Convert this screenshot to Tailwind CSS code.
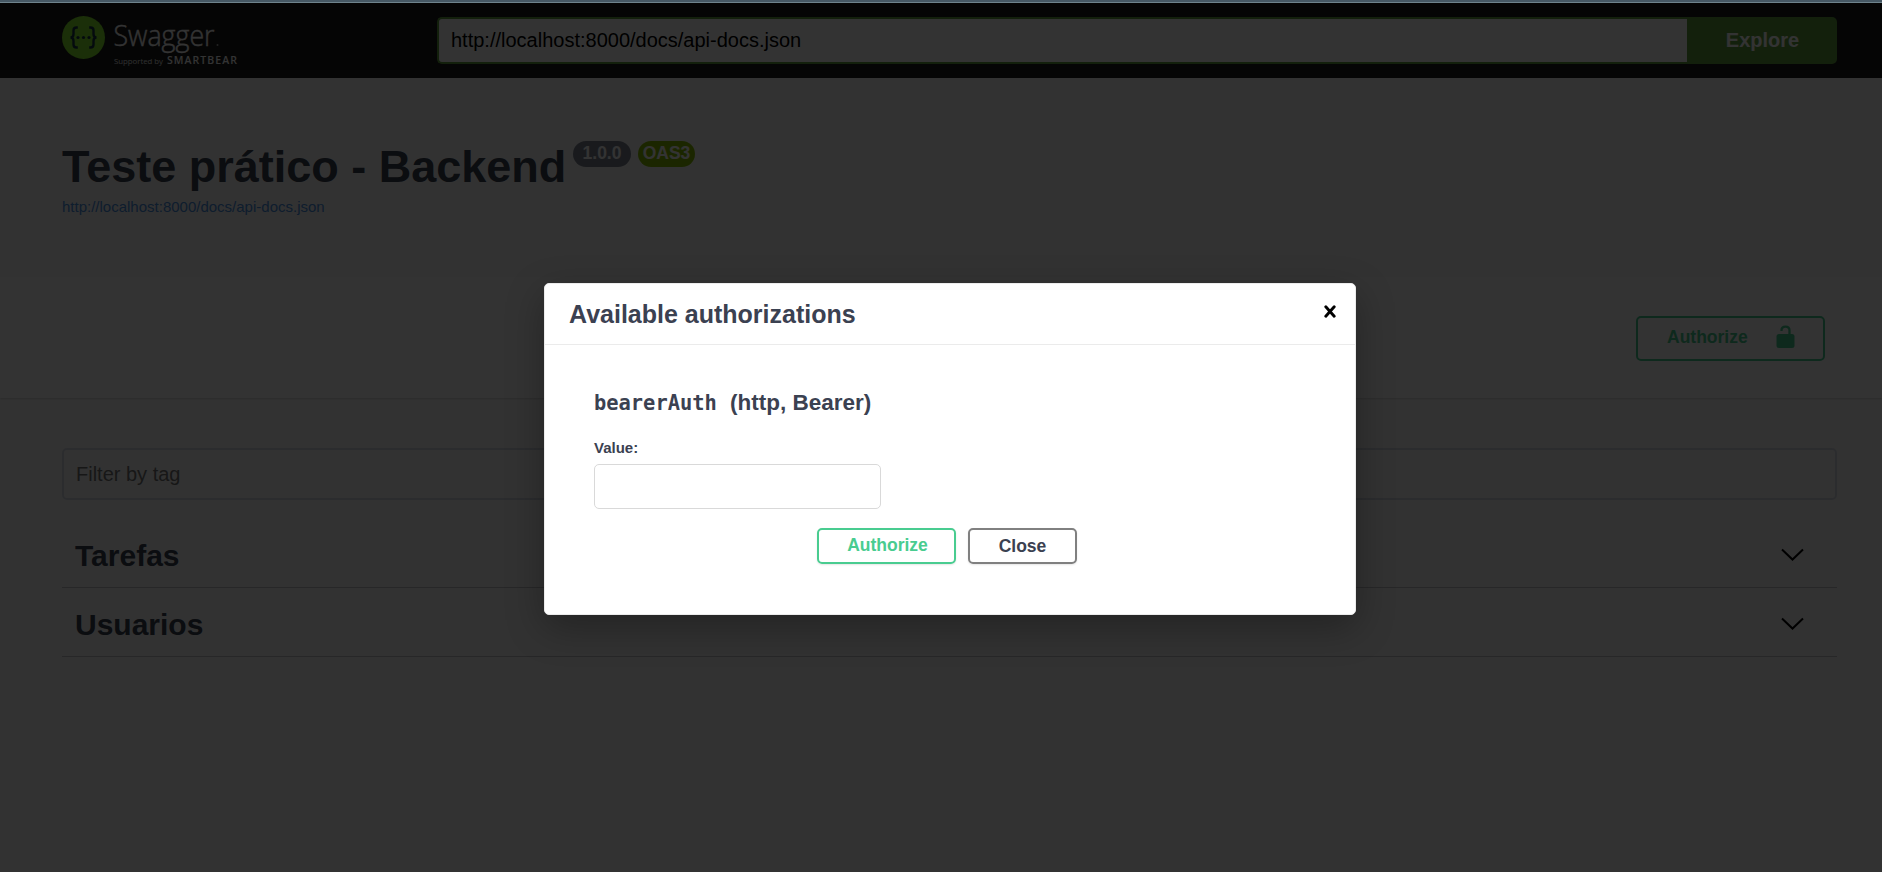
<!DOCTYPE html>
<html lang="pt-BR">
<head>
<meta charset="utf-8">
<title>Teste prático - Backend</title>
<script src="https://cdn.jsdelivr.net/npm/@tailwindcss/browser@4"></script>
</head>
<body class="h-[872px] overflow-hidden bg-[#fafafa] font-['Liberation_Sans',Arial,sans-serif] text-[#3b4151]">
<div class="h-[3px] bg-[#465864] border-b border-[#6f838c]"></div>

<header class="flex h-[75px] items-center bg-[#1b1b1b] pl-[62px] pr-[45px]">
  <svg class="mt-[3px] h-[54px] w-[180px] shrink-0" viewBox="0 0 180 54">
    <circle cx="21.5" cy="22.5" r="21.5" fill="#85ea2d"/>
    <g fill="none" stroke="#173647" stroke-width="2.4">
      <path d="M15.800 12.500h-1.300q-3 0-3 3v3.500q0 3.500-3 3.500q3 0 3 3.500v3.500q0 3 3 3h1.300"/>
      <path d="M27.200 12.500h1.300q3 0 3 3v3.500q0 3.500 3 3.500q-3 0-3 3.500v3.500q0 3-3 3h-1.300"/>
    </g>
    <g fill="#173647"><circle cx="16" cy="22.500" r="1.600"/><circle cx="21.500" cy="22.500" r="1.600"/><circle cx="27" cy="22.500" r="1.600"/></g>
    <g fill="#fff">
      <text x="51.500" y="31" font-family="Open Sans, sans-serif" font-weight="300" font-size="28.500" textLength="101" lengthAdjust="spacingAndGlyphs" stroke="#fff" stroke-width=".4">Swagger</text>
      <circle cx="155.500" cy="30" r="1" opacity=".6"/>
      <text x="52" y="49" font-family="Open Sans, sans-serif" font-size="7.800" textLength="49" opacity=".9">Supported by</text>
      <text x="105" y="49" font-family="Open Sans, sans-serif" font-weight="600" font-size="10.500" textLength="70">SMARTBEAR</text>
    </g>
  </svg>
  <div class="ml-auto flex h-[47px] w-[1400px]">
    <div class="flex-1 rounded-l-[5px] border-2 border-r-0 border-[#62a03f] bg-white pl-[12px] text-[20px] leading-[43px] text-black">http://localhost:8000/docs/api-docs.json</div>
    <div class="w-[150px] rounded-r-[5px] bg-[#62a03f] pl-px text-center text-[20px] font-bold leading-[47px] text-white">Explore</div>
  </div>
</header>

<section class="h-[199px] px-[62px] pt-[62px]">
  <div class="flex h-[54px] items-start">
    <h1 class="w-[511px] whitespace-nowrap text-[45px] font-bold leading-[54px]">Teste prático - Backend</h1>
    <span class="mt-px h-[26px] w-[58px] rounded-full bg-[#7d8492] text-center text-[17.500px] font-bold leading-[25px] text-white">1.0.0</span>
    <span class="ml-[7px] mt-px h-[26px] w-[57px] rounded-full bg-[#89bf04] text-center text-[17.500px] font-bold leading-[25px] text-white">OAS3</span>
  </div>
  <a class="mt-[3px] block text-[15px] leading-[19px] text-[#4990e2]">http://localhost:8000/docs/api-docs.json</a>
</section>

<section class="flex h-[121px] items-start justify-end bg-white pr-[57px] pt-[39px] shadow-[0_1px_2px_rgba(0,0,0,.15)]">
  <div class="flex h-[45px] w-[189px] items-start rounded-[5px] border-2 border-[#49cc90] pl-[29px] text-[#49cc90]">
    <span class="mt-[7px] w-[107px] text-[17.500px] font-bold leading-[24px]">Authorize</span>
    <svg class="mt-[5px] h-[27px] w-[22px]" viewBox="0 0 22 27"><rect x="2.500" y="11" width="18" height="14" rx="2.500" fill="#49cc90"/><path d="M7.500 8V7.300Q7.500 3.600 11.500 3.600T15.500 7.300V12" fill="none" stroke="#49cc90" stroke-width="2.300"/></svg>
  </div>
</section>

<main class="px-[62px] pr-[45px] pt-[50px]">
  <div class="h-[52px] rounded-[5px] border-2 border-[#d8dde7] bg-white/20 pl-[12px] text-[20px] leading-[49px] text-[#757575]">Filter by tag</div>
  <div class="mt-[19px] flex h-[69px] items-center justify-between border-b border-[#3b4151]/30 pl-[13px] pr-[33px]">
    <h3 class="mt-[6px] text-[30px] font-bold leading-[36px]">Tarefas</h3>
    <svg class="mt-[3px] h-[14px] w-[23px]" viewBox="0 0 23 14"><path d="M1 1.500 11.500 11.500 22 1.500" fill="none" stroke="#000" stroke-width="2"/></svg>
  </div>
  <div class="flex h-[69px] items-center justify-between border-b border-[#3b4151]/30 pl-[13px] pr-[33px]">
    <h3 class="mt-[6px] text-[30px] font-bold leading-[36px]">Usuarios</h3>
    <svg class="mt-[3px] h-[14px] w-[23px]" viewBox="0 0 23 14"><path d="M1 1.500 11.500 11.500 22 1.500" fill="none" stroke="#000" stroke-width="2"/></svg>
  </div>
</main>

<div class="absolute inset-x-0 bottom-0 top-[3px] bg-black/80"></div>

<div class="absolute left-[544px] top-[283px] h-[332px] w-[812px] rounded-[5px] border border-[#ebebeb] bg-white shadow-[0_12px_38px_rgba(0,0,0,.3)]">
  <div class="flex h-[61px] items-start justify-between border-b border-[#ebebeb] pl-[24px] pr-[19px]">
    <h3 class="mt-[15px] text-[25px] font-bold leading-[30px]">Available authorizations</h3>
    <svg class="mt-[21px] h-[13px] w-[12px]" viewBox="0 0 12 13"><path d="M1.800 1.800 10.200 11.200M10.200 1.800 1.800 11.200" stroke="#000" stroke-width="2.900" stroke-linecap="round"/></svg>
  </div>
  <div class="px-[49px] pt-[44px]">
    <h4 class="flex items-baseline text-[22.500px] font-bold leading-[28px]"><code class="w-[136px] font-['DejaVu_Sans_Mono',monospace] text-[20.400px] leading-[28px]">bearerAuth</code><span>(http, Bearer)</span></h4>
    <div class="mt-[21px] text-[15px] font-bold leading-[20px]">Value:</div>
    <div class="mt-[6px] h-[45px] w-[287px] rounded-[5px] border border-[#d9d9d9] bg-white"></div>
    <div class="ml-[223px] mt-[19px] flex gap-[12px] text-center text-[17.500px] font-bold">
      <div class="h-[36px] w-[139px] rounded-[5px] border-2 border-[#49cc90] pl-[2px] leading-[30px] text-[#49cc90] shadow-[0_1px_2px_rgba(0,0,0,.1)]">Authorize</div>
      <div class="h-[36px] w-[109px] rounded-[5px] border-2 border-[#808080] leading-[32px] shadow-[0_1px_2px_rgba(0,0,0,.1)]">Close</div>
    </div>
  </div>
</div>
</body>
</html>
